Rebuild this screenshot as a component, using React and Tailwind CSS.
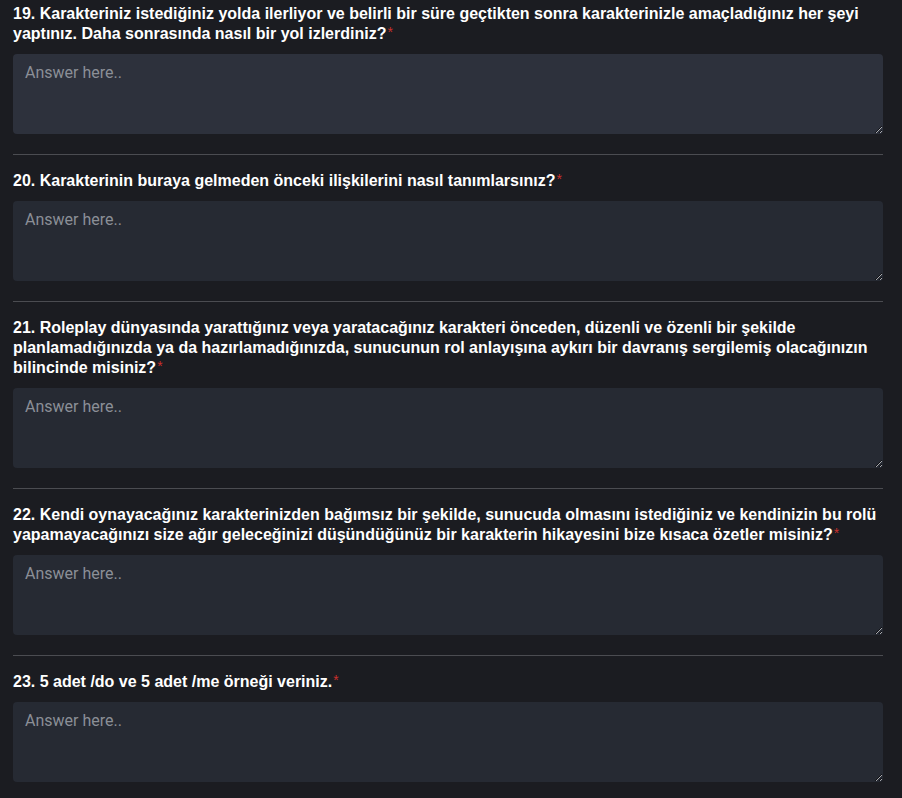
const questions = [
  {
    n: 19,
    text: "Karakteriniz istediğiniz yolda ilerliyor ve belirli bir süre geçtikten sonra karakterinizle amaçladığınız her şeyi yaptınız. Daha sonrasında nasıl bir yol izlerdiniz?",
  },
  {
    n: 20,
    text: "Karakterinin buraya gelmeden önceki ilişkilerini nasıl tanımlarsınız?",
  },
  {
    n: 21,
    text: "Roleplay dünyasında yarattığınız veya yaratacağınız karakteri önceden, düzenli ve özenli bir şekilde planlamadığınızda ya da hazırlamadığınızda, sunucunun rol anlayışına aykırı bir davranış sergilemiş olacağınızın bilincinde misiniz?",
  },
  {
    n: 22,
    text: "Kendi oynayacağınız karakterinizden bağımsız bir şekilde, sunucuda olmasını istediğiniz ve kendinizin bu rolü yapamayacağınızı size ağır geleceğinizi düşündüğünüz bir karakterin hikayesini bize kısaca özetler misiniz?",
  },
  {
    n: 23,
    text: "5 adet /do ve 5 adet /me örneği veriniz.",
  },
];

function Question({ q, first, last }) {
  return (
    <div className={first ? "pt-[4px]" : "pt-4"}>
      <label className="block text-[16px] leading-5 font-bold text-white">
        {q.n}. {q.text}
        <span className="text-[#c9302c] text-[14px] align-top font-normal leading-none relative top-[1px] ml-px">
          *
        </span>
      </label>
      <textarea
        placeholder="Answer here.."
        className={`mt-[10px] block w-full h-20 rounded px-3 pt-[7px] pb-2 text-[16px] leading-6 text-gray-200 placeholder:text-[#8b8f97] outline-none scheme-dark font-['Roboto',sans-serif] ${
          first ? "bg-[#2d313c]" : "bg-[#262a33]"
        }`}
      />
      {!last && <div className="mt-5 h-px bg-[#4b4c51]" />}
    </div>
  );
}

export default function App() {
  return (
    <div className="min-h-screen bg-[#1b1c21] font-['Liberation_Sans',Arial,sans-serif]">
      <div className="pl-[13px] pr-[19px] pb-4">
        {questions.map((q, i) => (
          <Question
            key={q.n}
            q={q}
            first={i === 0}
            last={i === questions.length - 1}
          />
        ))}
      </div>
    </div>
  );
}
